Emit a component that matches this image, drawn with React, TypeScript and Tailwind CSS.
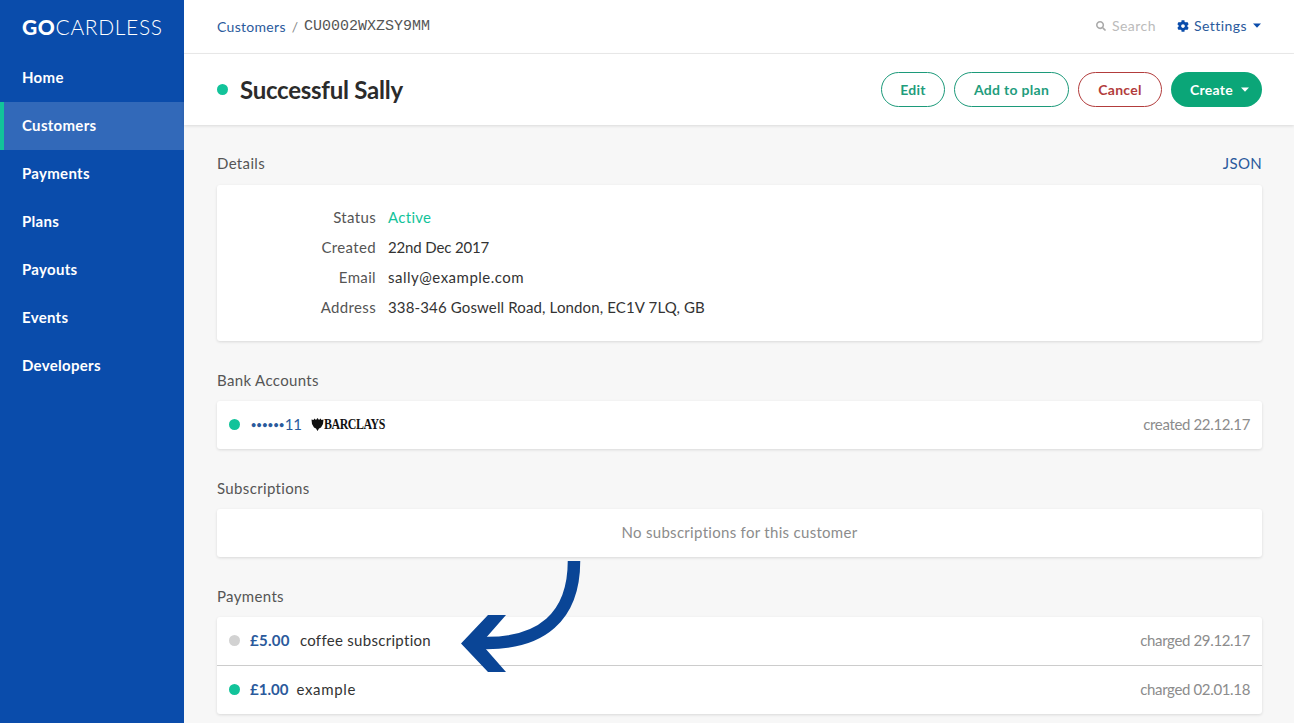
import { FaSearch, FaCog } from "react-icons/fa";

const font = { fontFamily: "Lato, 'Noto Sans', sans-serif" };
const nav = ["Home", "Customers", "Payments", "Plans", "Payouts", "Events", "Developers"];

function Caret({ className }: { className: string }) {
  return (
    <svg width="8" height="5" viewBox="0 0 8 5" className={className}>
      <path d="M0 0.5h8L4 4.8z" fill="currentColor" />
    </svg>
  );
}

function Dot({ color }: { color: string }) {
  return <span className={`block w-[11px] h-[11px] rounded-full shrink-0 ${color}`} />;
}

function Label({ children }: { children: React.ReactNode }) {
  return <div className="text-[15px] leading-[22px] text-[#555] tracking-[0.35px]">{children}</div>;
}

function Row({ children, right, border }: { children: React.ReactNode; right: string; border?: boolean }) {
  return (
    <div className={`flex items-center justify-between pl-[12px] pr-[12px] ${border ? "h-[49px] border-b border-[#ccc]" : "h-[48px]"}`}>
      <div className="flex items-center">{children}</div>
      <span className="text-[15px] text-[#8c8c8c] tracking-[-0.35px]">{right}</span>
    </div>
  );
}

function Detail({ k, children }: { k: string; children: React.ReactNode }) {
  return (
    <div className="flex h-[30px] items-center text-[15px]">
      <div className="w-[159px] text-right text-[#555] tracking-[0.35px]">{k}</div>
      <div className="ml-[12px] text-[#333]">{children}</div>
    </div>
  );
}

export default function App() {
  return (
    <div className="relative flex h-[723px] w-full overflow-hidden bg-[#f7f7f7]" style={font}>
      <aside className="w-[184px] shrink-0 bg-[#0a4cab] text-white">
        <div className="h-[54px] flex items-center pl-[22px] text-[21px] tracking-[0.65px]">
          <span className="font-black">GO</span>
          <span className="font-light">CARDLESS</span>
        </div>
        <nav>
          {nav.map((n) =>
            n === "Customers" ? (
              <div key={n} className="h-[48px] flex items-center pl-[18px] pb-[2px] border-l-4 border-[#12c39a] bg-[#3269b9] text-[15px] font-bold tracking-[0.3px]">
                {n}
              </div>
            ) : (
              <div key={n} className="h-[48px] flex items-center pl-[22px] pb-[2px] text-[15px] font-bold tracking-[0.3px]">
                {n}
              </div>
            )
          )}
        </nav>
      </aside>
      <main className="flex-1 min-w-0">
        <header className="h-[54px] bg-white border-b border-[#ececec] flex items-center justify-between pl-[33px] pr-[33px]">
          <div className="flex items-center text-[14px]">
            <span className="text-[#2a5a9c] tracking-[0.3px]">Customers</span>
            <span className="mx-[6px] text-[#888]">/</span>
            <span className="text-[#555] mt-[2px]" style={{ fontFamily: "'Liberation Mono', monospace", fontSize: "15px" }}>CU0002WXZSY9MM</span>
          </div>
          <div className="flex items-center text-[14px] -mt-[2px]">
            <FaSearch className="text-[#aaa] w-[10px] h-[10px] mr-[6px]" />
            <span className="text-[#bbb] tracking-[0.45px]">Search</span>
            <FaCog className="text-[#0a4cab] w-[12px] h-[12px] ml-[21px] mr-[5px]" />
            <span className="text-[#2a5a9c] tracking-[0.45px]">Settings</span>
            <Caret className="text-[#0a4cab] ml-[6px]" />
          </div>
        </header>
        <div className="h-[71px] bg-white shadow-[0_1px_3px_rgba(0,0,0,0.12)] flex items-center justify-between pl-[33px] pr-[32px] relative">
          <div className="flex items-center">
            <Dot color="bg-[#12c39a]" />
            <h1 className="ml-[12px] text-[24px] font-bold text-[#2b2b2b] tracking-[-0.25px]">Successful Sally</h1>
          </div>
          <div className="flex items-center gap-[9px] text-[14px] font-bold tracking-[0.3px]">
            <button className="h-[35px] w-[64px] rounded-full border border-[#1c9a7a] text-[#1f9d7d]">Edit</button>
            <button className="h-[35px] w-[115px] rounded-full border border-[#1c9a7a] text-[#1f9d7d]">Add to plan</button>
            <button className="h-[35px] w-[84px] rounded-full border border-[#b23c3c] text-[#b23c3c]">Cancel</button>
            <button className="h-[35px] w-[91px] rounded-full bg-[#0ba678] text-white flex items-center justify-center pl-[6px]">
              Create
              <Caret className="ml-[8px] text-white" />
            </button>
          </div>
        </div>
        <div className="pl-[33px] pr-[32px] pt-[27px]">
          <div className="flex justify-between items-center">
            <Label>Details</Label>
            <span className="text-[15px] text-[#2a5a9c] tracking-[0.3px]">JSON</span>
          </div>
          <div className="mt-[10px] h-[156px] bg-white rounded-[3px] shadow-[0_1px_3px_rgba(0,0,0,0.12)] py-[18px]">
            <Detail k="Status"><span className="text-[#12c39a] tracking-[0.3px]">Active</span></Detail>
            <Detail k="Created"><span className="tracking-[-0.15px]">22nd Dec 2017</span></Detail>
            <Detail k="Email"><span className="tracking-[0.5px]">sally@example.com</span></Detail>
            <Detail k="Address"><span className="tracking-[0.14px]">338-346 Goswell Road, London, EC1V 7LQ, GB</span></Detail>
          </div>
          <div className="mt-[28px]"><Label>Bank Accounts</Label></div>
          <div className="mt-[10px] bg-white rounded-[3px] shadow-[0_1px_3px_rgba(0,0,0,0.12)]">
            <Row right="created 22.12.17">
              <Dot color="bg-[#12c39a]" />
              <span className="ml-[11px] text-[#2a5a9c] flex items-center">
                <span className="text-[9px] tracking-[0.4px] font-bold">••••••</span>
                <span className="text-[15px] tracking-[-0.2px]">11</span>
              </span>
              <svg width="13" height="13" viewBox="0 0 12 13" className="ml-[9px]">
                <path d="M0 1.5 L2 2 L3 0.5 L4.5 2 L6 0 L7.5 2 L9 0.5 L10 2 L12 1.5 L11.5 6 L9.5 9.5 L7.5 10.5 L6 13 L4.5 10.5 L2.5 9.5 L0.5 6 Z" fill="#111" />
              </svg>
              <span className="text-[14px] font-bold text-[#111] tracking-[-0.5px] origin-left scale-x-[0.85]" style={{ fontFamily: "'Liberation Serif', serif" }}>BARCLAYS</span>
            </Row>
          </div>
          <div className="mt-[28px]"><Label>Subscriptions</Label></div>
          <div className="mt-[10px] h-[48px] flex items-center justify-center bg-white rounded-[3px] shadow-[0_1px_3px_rgba(0,0,0,0.12)] text-[15px] text-[#8c8c8c] tracking-[0.3px]">
            No subscriptions for this customer
          </div>
          <div className="mt-[28px]"><Label>Payments</Label></div>
          <div className="mt-[10px] bg-white rounded-[3px] shadow-[0_1px_3px_rgba(0,0,0,0.12)]">
            <Row right="charged 29.12.17" border>
              <Dot color="bg-[#d2d2d2]" />
              <span className="ml-[10px] text-[15px] font-bold text-[#2a5a9c] tracking-[0.3px]">£5.00</span>
              <span className="ml-[10px] text-[15px] text-[#333] tracking-[0.3px]">coffee subscription</span>
            </Row>
            <Row right="charged 02.01.18">
              <Dot color="bg-[#12c39a]" />
              <span className="ml-[10px] text-[15px] font-bold text-[#2a5a9c]">£1.00</span>
              <span className="ml-[8px] text-[15px] text-[#333] tracking-[0.7px]">example</span>
            </Row>
          </div>
        </div>
      </main>
      <svg width="1294" height="723" viewBox="0 0 1294 723" className="absolute inset-0 pointer-events-none">
        <path d="M574 561 C574 618 540 643 487 643 L476 643" fill="none" stroke="#0a4596" strokeWidth="12.5" />
        <path d="M461 643.5 L488 615 L506 615 L481 643.5 L506 672 L488 672 Z" fill="#0a4596" />
      </svg>
    </div>
  );
}
